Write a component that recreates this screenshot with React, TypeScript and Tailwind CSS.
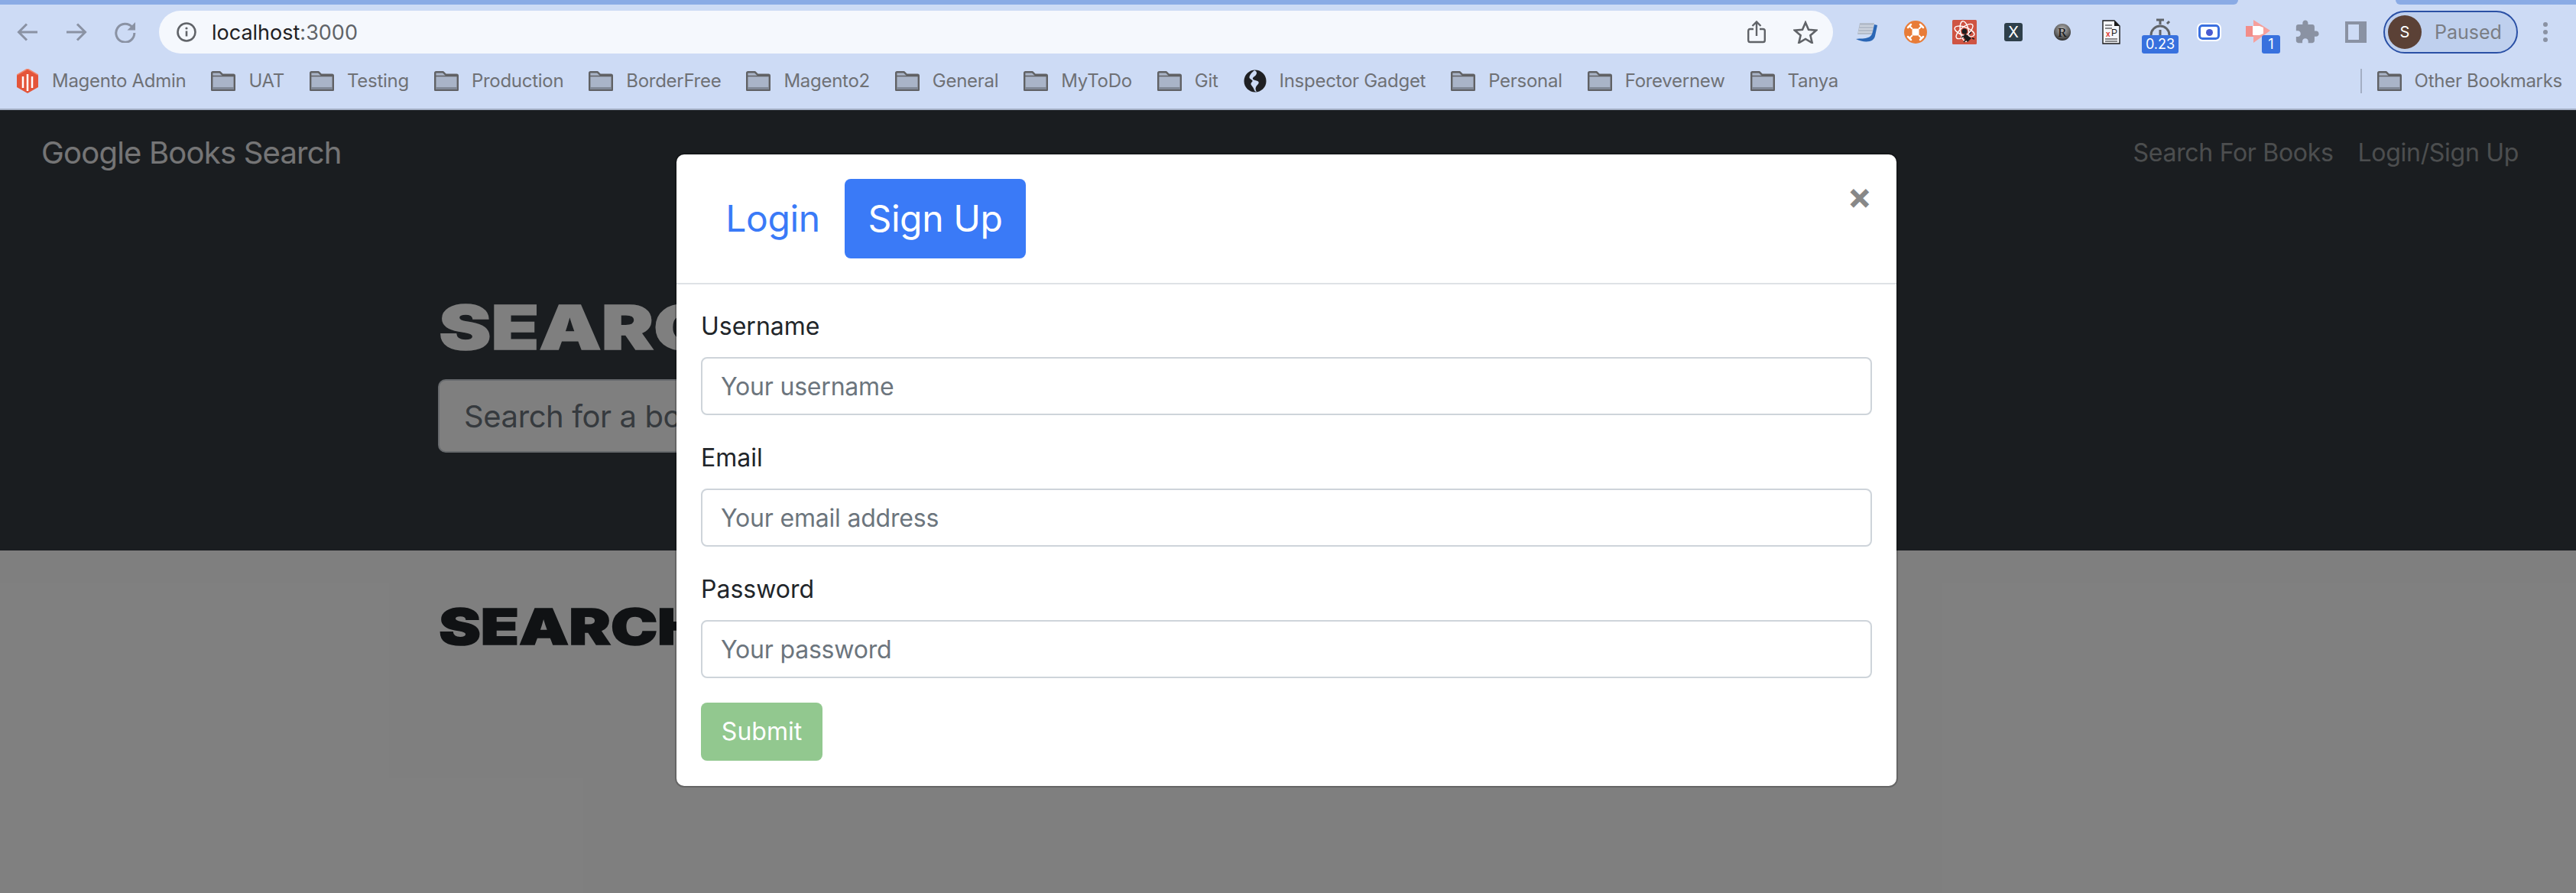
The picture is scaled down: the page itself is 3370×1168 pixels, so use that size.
import React from 'react';

const Folder = () => (
  <svg width="32" height="26" viewBox="0 0 32 26" className="shrink-0">
    <path d="M1.2 24.8V2.5c0-.7.5-1.3 1.3-1.3h9l3.5 3.5h14.500c.7 0 1.300.6 1.300 1.300v18.800z" fill="#a9b4c8" stroke="#606164" strokeWidth="2.400" strokeLinejoin="round" />
    <path d="M2 21h28v3H2z" fill="#808896" />
    <path d="M2 6.500h28" stroke="#606164" strokeWidth="1.500" />
  </svg>
);

const Magento = () => (
  <svg width="28" height="32" viewBox="0 0 28 32" className="shrink-0">
    <path d="M14 0l14 8v16l-14 8-14-8V8z" fill="#e4553a" />
    <path d="M8 10v15M14 7v22M20 10v15" stroke="#fff" strokeWidth="2.500" />
    <path d="M0 8l14-8 14 8" fill="none" stroke="#f0876f" strokeWidth="1.500" />
  </svg>
);

const Globe = () => (
  <svg width="30" height="30" viewBox="0 0 30 30" className="shrink-0">
    <circle cx="15" cy="15" r="14.500" fill="#1f2023" />
    <path d="M14 1c5 2 3 6 0 8s-3 4 1 5c5 1 6 3 3 6s-3 6-1 9c-3 0-3-3-5-6s-4-4-1-7-6-3-3-8 4-5 6-7z" fill="#cddbf5" />
  </svg>
);

const bookmarks = ['UAT', 'Testing', 'Production', 'BorderFree', 'Magento2', 'General', 'MyToDo', 'Git'];

const Bookmark = ({ icon, label }: { icon: React.ReactNode; label: string }) => (
  <div className="flex items-center gap-[17px]">
    {icon}
    <span className="text-[24px] leading-[30px] tracking-[-0.28px] text-[#6f7175] whitespace-nowrap">{label}</span>
  </div>
);

const Slot = ({ children }: { children: React.ReactNode }) => (
  <div className="relative flex h-14 w-16 shrink-0 items-center justify-center">{children}</div>
);

const Badge = ({ children, className }: { children: React.ReactNode; className: string }) => (
  <span className={`absolute top-[32px] flex h-6 items-center justify-center rounded-[3px] bg-[#3871de] text-[18px] leading-none text-white ${className}`}>
    {children}
  </span>
);

const TopBar = () => (
  <header className="shrink-0 bg-[#cddbf5] border-b-2 border-[#a3aec3]">
    <div className="flex h-[6px]">
      <div className="w-[2928px] rounded-br-[8px] bg-[#8aabe5]" />
      <div className="ml-auto w-[236px] rounded-bl-[8px] bg-[#8aabe5]" />
    </div>
    <div className="flex items-center pl-1 pr-2 pt-2">
      <Slot>
        <svg width="28" height="28" viewBox="0 0 28 28" fill="none" stroke="#8a92a3" strokeWidth="3">
          <path d="M27 14H3M13 3.500 2.500 14 13 24.500" />
        </svg>
      </Slot>
      <Slot>
        <svg width="28" height="28" viewBox="0 0 28 28" fill="none" stroke="#8a92a3" strokeWidth="3">
          <path d="M1 14h24M15 3.500 25.500 14 15 24.500" />
        </svg>
      </Slot>
      <Slot>
        <svg width="28" height="28" viewBox="0 0 28 28" fill="none">
          <path d="M23 7.500A12 12 0 1 0 25.800 15" stroke="#8a92a3" strokeWidth="3" />
          <path d="M27 1v10.500H16.500z" fill="#8a92a3" />
        </svg>
      </Slot>
      <div className="ml-3 flex h-14 flex-1 items-center rounded-full bg-[#f5f8fd]">
        <svg width="28" height="28" viewBox="0 0 28 28" className="ml-[22px]" fill="none">
          <circle cx="14" cy="14" r="11.500" stroke="#606368" strokeWidth="2.600" />
          <path d="M14 12.500v7" stroke="#606368" strokeWidth="2.600" />
          <circle cx="14" cy="9" r="1.600" fill="#606368" />
        </svg>
        <span className="ml-[19px] text-[27px] leading-none text-[#1f2023]">
          localhost<span className="text-[#5f6368]">:3000</span>
        </span>
        <div className="ml-auto flex items-center">
          <div className="flex w-16 justify-center">
            <svg width="24" height="30" viewBox="0 0 24 30" fill="none" stroke="#606368" strokeWidth="2.400">
              <path d="M8 11H3.500c-1.300 0-2.300 1-2.300 2.300v12.400c0 1.300 1 2.300 2.300 2.300h17c1.300 0 2.300-1 2.300-2.300V13.300c0-1.300-1-2.300-2.300-2.300H16" />
              <path d="M12 20V2M6.500 7 12 1.500 17.500 7" />
            </svg>
          </div>
          <div className="mr-1 flex w-16 justify-center">
            <svg width="32" height="30" viewBox="0 0 32 30" fill="none" stroke="#606368" strokeWidth="2.600" strokeLinejoin="miter">
              <path d="M16 2.500l4 9.300 10 .9-7.600 6.600 2.300 9.800L16 23.900 7.300 29.100l2.300-9.800L2 12.700l10-.9z" />
            </svg>
          </div>
        </div>
      </div>
      <div className="ml-3 flex">
        <Slot>
          <svg width="30" height="26" viewBox="0 0 30 26">
            <path d="M6 1h19l-3 15H3z" fill="#b3bcca" />
            <path d="M6 5h18M5 9h18M4 13h18" stroke="#e3e8f0" strokeWidth="1.200" />
            <path d="M25 3l4 1-3 14c-.5 3-3 6-7 7-6 1-12 0-18-3 6-1 12 0 16-2 4-1.500 5-4 6-8z" fill="#2a66b5" />
          </svg>
        </Slot>
        <Slot>
          <svg width="30" height="30" viewBox="0 0 30 30">
            <circle cx="15" cy="15" r="15" fill="#e87c38" />
            <rect x="10.500" y="10.500" width="9" height="9" rx="2" fill="#fff" />
            <path d="M11 11 7.500 7.500M19 11l3.500-3.500M11 19l-3.500 3.500M19 19l3.500 3.500" stroke="#fff" strokeWidth="2" />
            <path d="M5 9l4-4M21 5l4 4M5 21l4 4M21 25l4-4" stroke="#fff" strokeWidth="2.500" strokeLinecap="round" />
          </svg>
        </Slot>
        <Slot>
          <svg width="32" height="32" viewBox="0 0 32 32">
            <rect width="32" height="32" rx="1.500" fill="#cf5443" />
            <g fill="none" stroke="#fff" strokeWidth="1.400">
              <ellipse cx="16" cy="15" rx="13.500" ry="5.500" transform="rotate(20 16 15)" />
              <ellipse cx="16" cy="15" rx="13.500" ry="5.500" transform="rotate(80 16 15)" />
              <ellipse cx="16" cy="15" rx="13.500" ry="5.500" transform="rotate(140 16 15)" />
            </g>
            <circle cx="16" cy="15" r="3.500" fill="#1c1c1c" />
            <path d="M17 18l8 6-5 5-6-7z" fill="#1c1c1c" />
            <path d="M15 21l-3 2M18 26l-3 3M22 19l3-3M26 24l3 1" stroke="#1c1c1c" strokeWidth="1.500" />
          </svg>
        </Slot>
        <Slot>
          <div className="flex h-6 w-6 items-center justify-center rounded-[3px] bg-[#2e3f4a] text-[20px] leading-none text-white">X</div>
        </Slot>
        <Slot>
          <svg width="24" height="24" viewBox="0 0 24 24">
            <defs>
              <radialGradient id="rball" cx="50%" cy="35%" r="65%">
                <stop offset="0%" stopColor="#b9b9b9" />
                <stop offset="70%" stopColor="#5e5e5e" />
                <stop offset="100%" stopColor="#2a2a2a" />
              </radialGradient>
            </defs>
            <circle cx="12" cy="12" r="11" fill="url(#rball)" />
            <text x="12" y="18" textAnchor="middle" fontSize="17" fontFamily="'Liberation Serif', serif" fill="#111">R</text>
          </svg>
        </Slot>
        <Slot>
          <svg width="24" height="32" viewBox="0 0 24 32">
            <path d="M1 1h15l7 7v23H1z" fill="#f4f6fa" stroke="#1a1a1a" strokeWidth="1.400" />
            <path d="M16 1l7 7h-7z" fill="#1a1a1a" />
            <path d="M4 7h9M4 11h9M4 25h16M4 28h16" stroke="#1a1a1a" strokeWidth="1.200" />
            <text x="5" y="22" fontSize="10" fontWeight="700" fontFamily="'Liberation Sans', sans-serif" fill="#e0352b">x</text>
            <text x="12" y="21" fontSize="12" fontFamily="'Liberation Sans', sans-serif" fill="#1a1a1a">P</text>
          </svg>
        </Slot>
        <Slot>
          <svg width="28" height="22" viewBox="0 0 28 22" className="-mt-[14px]" fill="none" stroke="#5f6368" strokeWidth="3">
            <path d="M2 22A12 12 0 0 1 26 22" />
            <path d="M9 2h10M14 2v6M14 15v7M23 7l3-3" />
          </svg>
          <Badge className="left-2 w-12">0.23</Badge>
        </Slot>
        <Slot>
          <div className="flex h-[20px] w-[28px] items-center justify-center rounded-[5px] border-[3px] border-[#3a6fe0] bg-white outline-2 outline-white">
            <span className="h-[9px] w-[9px] rounded-full bg-[#4a5bd0]" />
          </div>
        </Slot>
        <Slot>
          <svg width="32" height="30" viewBox="0 0 32 30" className="-mt-0.5 -ml-px">
            <path d="M10 0l22 14-22 16V0z" fill="#f6a09c" />
            <path d="M0 8h10v14H0z" fill="#f28d89" />
            <path d="M9 8h9l5 2v8l-5 2H9z" fill="#fff" />
          </svg>
          <Badge className="left-[37px] w-6">1</Badge>
        </Slot>
        <Slot>
          <svg width="34" height="34" viewBox="0 0 24 24" fill="#8a92a3">
            <path d="M20.500 11H19V7c0-1.100-.9-2-2-2h-4V3.500C13 2.120 11.880 1 10.500 1S8 2.120 8 3.500V5H4c-1.100 0-1.990.9-1.990 2v3.800H3.500c1.490 0 2.700 1.210 2.700 2.700s-1.210 2.700-2.700 2.700H2V20c0 1.100.9 2 2 2h3.800v-1.500c0-1.490 1.210-2.700 2.700-2.700 1.490 0 2.700 1.210 2.700 2.700V22H17c1.100 0 2-.9 2-2v-4h1.500c1.380 0 2.500-1.120 2.500-2.500S21.880 11 20.500 11z" />
          </svg>
        </Slot>
        <Slot>
          <svg width="28" height="28" viewBox="0 0 28 28">
            <path d="M0 0h28v28H0z" fill="#8a92a3" />
            <path d="M4 4h14v20H4z" fill="#cddbf5" />
          </svg>
        </Slot>
      </div>
      <div className="ml-1 flex h-14 w-[176px] shrink-0 items-center rounded-full border-2 border-[#2a50a5] bg-[#bfd0ee] pl-1">
        <div className="flex h-11 w-11 items-center justify-center rounded-full bg-[#5b4136] text-[20px] leading-none text-white">S</div>
        <span className="ml-[17px] text-[25px] leading-none text-[#7a7d84]">Paused</span>
      </div>
      <div className="ml-1 flex w-16 flex-col items-center gap-1">
        <span className="h-1.5 w-1.5 rounded-full bg-[#8a92a3]" />
        <span className="h-1.5 w-1.5 rounded-full bg-[#8a92a3]" />
        <span className="h-1.5 w-1.5 rounded-full bg-[#8a92a3]" />
      </div>
    </div>
    <div className="flex h-[72px] items-center gap-[33px] pl-[22px] pr-[18px]">
      <div className="flex items-center gap-[18px]">
        <Magento />
        <span className="text-[24px] leading-[30px] tracking-[-0.28px] text-[#6f7175]">Magento Admin</span>
      </div>
      {bookmarks.map((b) => (
        <Bookmark key={b} icon={<Folder />} label={b} />
      ))}
      <Bookmark icon={<Globe />} label="Inspector Gadget" />
      <Bookmark icon={<Folder />} label="Personal" />
      <Bookmark icon={<Folder />} label="Forevernew" />
      <Bookmark icon={<Folder />} label="Tanya" />
      <div className="ml-auto flex items-center gap-5">
        <div className="h-8 w-[2px] bg-[#a3aec3]" />
        <Bookmark icon={<Folder />} label="Other Bookmarks" />
      </div>
    </div>
  </header>
);

const Field = ({ label, placeholder }: { label: string; placeholder: string }) => (
  <div className="mb-8">
    <label className="mb-4 block text-[32px] leading-[48px] text-[#212529]">{label}</label>
    <input
      placeholder={placeholder}
      className="block h-[76px] w-full rounded-lg border-2 border-[#ced4da] bg-white px-6 text-[32px] tracking-[-0.2px] placeholder:text-[#6c757d]"
    />
  </div>
);

export default function App() {
  return (
    <div className="flex h-[1168px] w-[3370px] flex-col overflow-hidden bg-white font-['Inter',sans-serif]">
      <TopBar />
      <main className="relative flex-1">
        <div className="bg-[#343a40] h-[576px]">
          <nav className="flex h-[112px] items-center justify-between pl-[54px] pr-[75px]">
            <span className="text-[40px] tracking-[-0.8px] text-white/90">Google Books Search</span>
            <div className="flex gap-8 text-[32px] tracking-[-0.3px] text-white/50">
              <span>Search For Books</span>
              <span>Login/Sign Up</span>
            </div>
          </nav>
          <div className="mx-auto w-[2224px] pt-[124px]">
            <h1 className="mb-5 text-[80px] leading-[96px] font-black text-white [-webkit-text-stroke:1.5px_white]">
              <span className="inline-block origin-left scale-x-[1.28] pl-[1px]">SEARCH</span>
            </h1>
            <input
              placeholder="Search for a book"
              className="h-24 w-[1460px] rounded-[10px] border-2 border-[#ced4da] bg-white px-8 text-[40px] tracking-[-0.4px] placeholder:text-[#6c757d]"
            />
          </div>
        </div>
        <div className="mx-auto w-[2224px] pt-[61px]">
          <h2 className="text-[64px] leading-[77px] font-black text-[#212529] [-webkit-text-stroke:1.5px_#212529]">
            <span className="inline-block origin-left scale-x-[1.28] pl-[1px]">SEARCH</span>
          </h2>
        </div>
        {/* modal backdrop */}
        <div className="absolute inset-0 flex justify-center bg-black/50 pr-1 pt-[58px]">
          <div className="h-[826px] w-[1596px] rounded-[10px] bg-white shadow-[0_0_0_2px_rgba(0,0,0,0.2)]">
            <div className="flex items-start justify-between border-b-2 border-[#dee2e6] p-8">
              <div className="flex text-[48px] leading-none tracking-[-0.4px]">
                <a className="flex h-[104px] w-[188px] items-center justify-center rounded-lg text-[#3a7af7]">Login</a>
                <a className="flex h-[104px] w-[237px] items-center justify-center rounded-lg bg-[#3a7af7] text-white">Sign Up</a>
              </div>
              <span className="-mt-[2px] text-[48px] leading-none font-bold text-[#888888]">×</span>
            </div>
            <form className="-mt-px p-8 pb-0">
              <Field label="Username" placeholder="Your username" />
              <Field label="Email" placeholder="Your email address" />
              <Field label="Password" placeholder="Your password" />
              <button type="button" className="h-[76px] w-[159px] rounded-lg bg-[#92c88f] text-[32px] text-white">
                Submit
              </button>
            </form>
          </div>
        </div>
      </main>
    </div>
  );
}
